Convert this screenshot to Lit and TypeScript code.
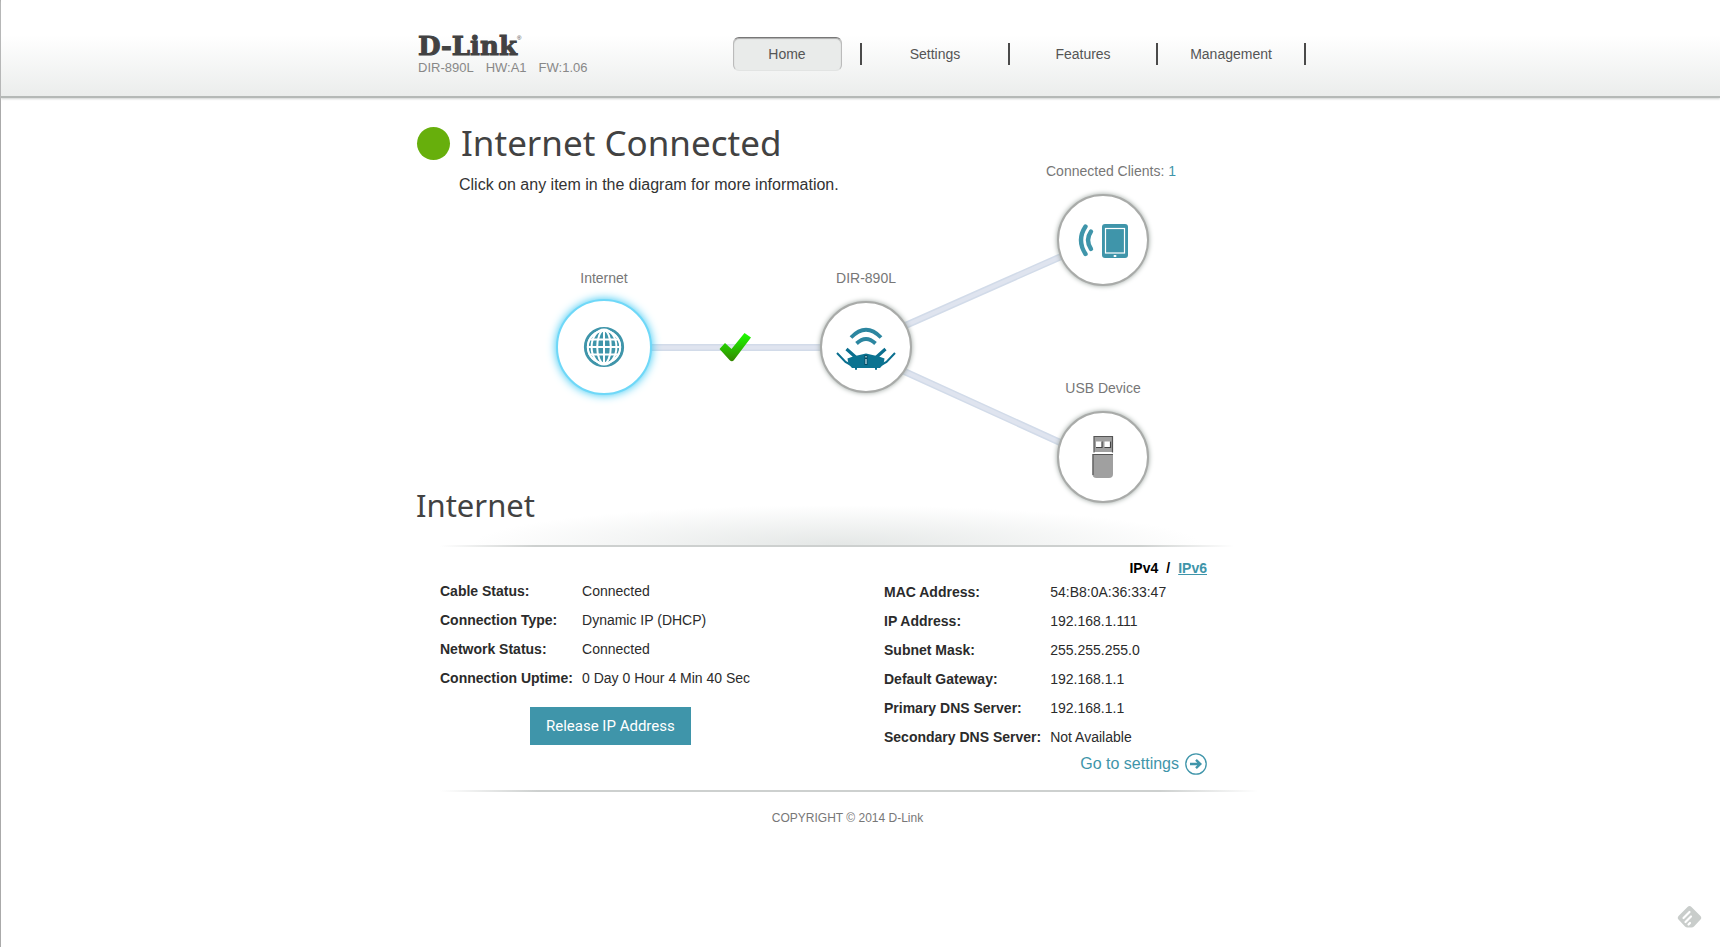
import { LitElement, html, css, svg } from "lit";
import { customElement, property } from "lit/decorators.js";

type Row = [string, string];

const globeIcon = svg`
  <svg class="glyph" viewBox="-24 -24 48 48" width="48" height="48" aria-hidden="true">
    <circle r="15.5" fill="#3f95aa"/>
    <circle r="18.6" fill="none" stroke="#3f95aa" stroke-width="3"/>
    <circle r="16.2" fill="none" stroke="#fff" stroke-width="2"/>
    <g fill="none" stroke="#fff" stroke-width="2">
      <path d="M0-16V16M-16 0H16"/>
      <ellipse rx="6.8" ry="16.5"/>
      <ellipse rx="12.4" ry="17.5"/>
      <path d="M-14-7.5H14M-14 7.5H14"/>
    </g>
  </svg>`;

const routerIcon = svg`
  <svg class="glyph" viewBox="-32 -24 64 48" width="64" height="48" aria-hidden="true">
    <g fill="none" stroke="#2c86a0" stroke-linecap="butt" stroke-width="3.8">
      <path d="M-15-9.500Q0-25 15-9.500"/>
      <path d="M-9.500-3.500Q0-12.500 9.500-3.500"/>
    </g>
    <g fill="none" stroke="#0b6f8f">
      <path d="M-19.500 2L-10 10.500M19.500 2L10 10.500" stroke-width="3.200"/>
      <path d="M-29 6L-20.500 15L-14 18.500M29 6L20.500 15L14 18.500" stroke-width="2"/>
    </g>
    <path d="M-18.500 11.500L-13 9.500L0 6.500L13 9.500L18.500 11.500L17.500 17L14 21H-14L-17.500 17Z" fill="#0b7391"/>
    <path d="M-10 20.500v2.200M10 20.500v2.200" stroke="#0b6f8f" stroke-width="2"/>
    <path d="M0 8V18" stroke="#064b62" stroke-width="3"/>
    <path d="M0 9V10.500M0 12V17" stroke="#cfeaf2" stroke-width="1.200"/>
  </svg>`;

const tabletIcon = svg`
  <svg class="glyph" viewBox="-26 -18 52 36" width="52" height="36" aria-hidden="true">
    <g fill="none" stroke="#3f95aa" stroke-width="4.400" stroke-linecap="round">
      <path d="M-17.500-13.500Q-26.500 0-17.500 14"/>
      <path d="M-12-8.500Q-18 0-12 9"/>
    </g>
    <rect x="-1" y="-16" width="26" height="34" rx="3" fill="#3f95aa"/>
    <rect x="2.500" y="-11.500" width="19" height="24.500" fill="none" stroke="#fff" stroke-width="1.200"/>
    <rect x="10.500" y="15" width="3" height="2" rx="1" fill="#fff"/>
  </svg>`;

const usbIcon = svg`
  <svg class="glyph" viewBox="-12 -22 24 44" width="24" height="44" aria-hidden="true">
    <rect x="-9" y="-21" width="18.500" height="16" fill="#a0a0a0"/>
    <path d="M-9-4.500V-20.500H9.500V-4.500" fill="none" stroke="#555" stroke-width="1.200"/>
    <path d="M-7-15.500h6v5.500h-6zM1.500-15.500h6v5.500h-6z" fill="#fff"/>
    <path d="M-7-9.500h6v-6M1.500-9.500h6v-6" fill="none" stroke="#444" stroke-width="1.200"/>
    <path d="M-10.500-3H10V17q0 4-4 4H-6.500q-4 0-4-4z" fill="#a0a0a0"/>
    <path d="M-10 18V-2.500H10" fill="none" stroke="#555" stroke-width="1.200"/>
  </svg>`;

const arrowIcon = svg`
  <svg viewBox="0 0 22 22" width="22" height="22" aria-hidden="true">
    <circle cx="11" cy="11" r="10.200" fill="none" stroke="#3f95aa" stroke-width="1.300"/>
    <path d="M5 11H15M11 6.800L15.300 11L11 15.200" fill="none" stroke="#3f95aa" stroke-width="2.400"/>
  </svg>`;

@customElement("site-header")
class SiteHeader extends LitElement {
  static styles = css`
    :host {
      display: block;
      height: 96px;
      background: linear-gradient(#fff 0, #fff 35px, #ebedec 96px);
      border-bottom: 2px solid #b5b9b7;
      box-shadow: 0 1px 2px #d0d4d2;
    }
    .bar {
      display: flex;
      justify-content: space-between;
      max-width: 891px;
      margin: 0 auto;
      padding-top: 32px;
    }
    .brand {
      padding-left: 3px;
    }
    .logo {
      display: flex;
      color: #424242;
      font: bold 26px/28px "DejaVu Serif", serif;
      -webkit-text-stroke: 1px #424242;
      text-decoration: none;
    }
    .mark {
      font: 6px/8px "Liberation Sans", sans-serif;
      -webkit-text-stroke: 0;
      padding-top: 2px;
    }
    .versions {
      display: flex;
      gap: 12px;
      color: #888;
      font-size: 13px;
      line-height: 16px;
    }
    .menu {
      display: flex;
      padding-top: 5px;
    }
    .cell {
      box-sizing: border-box;
      width: 148px;
      height: 34px;
      padding-right: 2px;
      display: flex;
      justify-content: center;
      background: linear-gradient(#4a4a4a, #4a4a4a) right center / 2px 22px no-repeat;
    }
    .item {
      box-sizing: border-box;
      width: 109px;
      border: 1px solid transparent;
      border-radius: 6px;
      color: #555;
      font-size: 14px;
      line-height: 32px;
      text-align: center;
      text-decoration: none;
    }
    .current {
      background: #e9ebea;
      border-color: #777 #bbb #e2e4e3;
      box-shadow: inset 0 1px 1px #aaa;
    }
  `;
  render() {
    const items = ["Home", "Settings", "Features", "Management"];
    return html`<header class="bar">
      <div class="brand">
        <a class="logo" href="#">D-Link<span class="mark">®</span></a>
        <div class="versions"><span>DIR-890L</span><span>HW:A1</span><span>FW:1.06</span></div>
      </div>
      <nav class="menu">
        ${items.map(
          (t, i) => html`<div class="cell"><a class="item ${i === 0 ? "current" : ""}" href="#">${t}</a></div>`
        )}
      </nav>
    </header>`;
  }
}

@customElement("network-map")
class NetworkMap extends LitElement {
  static styles = css`
    :host {
      display: block;
      position: relative;
      height: 410px;
    }
    .links {
      position: absolute;
      left: 0;
      top: 0;
    }
    .node,
    .label {
      position: absolute;
      transform: translate(-50%, -50%);
    }
    .node {
      box-sizing: border-box;
      width: 92px;
      height: 92px;
      padding: 0;
      display: grid;
      place-items: center;
      background: #fff;
      border: 2px solid #a9aba9;
      border-radius: 50%;
      box-shadow: 0 0 5px #99a39e;
    }
    .active {
      width: 96px;
      height: 96px;
      border-color: #6fd8f8;
      box-shadow: 0 0 10px #33c6f2;
    }
    .glyph {
      display: block;
    }
    .label {
      color: #777;
      font-size: 14px;
      line-height: 18px;
      white-space: nowrap;
    }
    .count {
      color: #3f95aa;
    }
    .wan { left: 189px; top: 249px; }
    .router { left: 451px; top: 249px; }
    .clients { left: 688px; top: 142px; }
    .usb { left: 688px; top: 359px; }
    .wan-label { left: 189px; top: 180px; }
    .router-label { left: 451px; top: 180px; }
    .clients-label { left: 696px; top: 73px; }
    .usb-label { left: 688px; top: 290px; }
  `;
  render() {
    const routes = ["M189 249.500H451", "M451 245L688 140", "M451 256L688 364"];
    return html`
      <svg class="links" width="891" height="410" viewBox="0 0 891 410" aria-hidden="true">
        <defs>
          <linearGradient id="tick" x1="0" y1="0" x2="0" y2="1">
            <stop offset="0" stop-color="#1cff00" />
            <stop offset="1" stop-color="#358500" />
          </linearGradient>
        </defs>
        ${routes.map(
          (d) => svg`<path d=${d} fill="none" stroke="#d2dbe9" stroke-width="7"/>
            <path d=${d} fill="none" stroke="#dfe4ef" stroke-width="4"/>`
        )}
        <path d="M304.500 251L310 245L316.500 251L329.500 235L336 239.500L319 262Q317 264.500 314.500 262Z" fill="url(#tick)" />
      </svg>
      <button class="node active wan" aria-label="Internet">${globeIcon}</button>
      <button class="node router" aria-label="DIR-890L">${routerIcon}</button>
      <button class="node clients" aria-label="Connected Clients">${tabletIcon}</button>
      <button class="node usb" aria-label="USB Device">${usbIcon}</button>
      <div class="label wan-label">Internet</div>
      <div class="label router-label">DIR-890L</div>
      <div class="label clients-label">Connected Clients: <span class="count">1</span></div>
      <div class="label usb-label">USB Device</div>
    `;
  }
}

@customElement("info-list")
class InfoList extends LitElement {
  @property({ attribute: false }) rows: Row[] = [];
  static styles = css`
    :host {
      display: block;
    }
    .list {
      border-collapse: collapse;
      color: #2b2b2b;
      font-size: 14px;
      line-height: 29px;
      white-space: nowrap;
    }
    .term,
    .value {
      padding: 0;
      text-align: left;
    }
    .term {
      padding-right: 9px;
    }
  `;
  render() {
    return html`<table class="list">
      <tbody>
        ${this.rows.map(
          ([k, v]) => html`<tr><th class="term" scope="row">${k}:</th><td class="value">${v}</td></tr>`
        )}
      </tbody>
    </table>`;
  }
}

@customElement("app-root")
class AppRoot extends LitElement {
  static styles = css`
    :host {
      display: block;
      box-sizing: border-box;
      min-height: 100vh;
      border-left: 1px solid #aaa;
      background: #fff;
      font-family: "Liberation Sans", Arial, sans-serif;
    }
    .page {
      max-width: 891px;
      margin: 0 auto;
    }
    .hero {
      display: grid;
      grid-template-rows: auto 1fr;
    }
    .map {
      grid-area: 1 / 1 / 3 / 2;
      margin-bottom: 37px;
    }
    .intro {
      grid-area: 1 / 1;
      z-index: 1;
      justify-self: start;
      padding: 20px 0 0 2px;
    }
    .status {
      display: flex;
      align-items: center;
      gap: 11px;
    }
    .dot {
      width: 33px;
      height: 33px;
      border-radius: 50%;
      background: #67af0c;
    }
    .title,
    .subtitle {
      margin: 0;
      color: #424242;
      font-family: "Noto Sans", sans-serif;
      font-weight: 400;
    }
    .title {
      font-size: 35px;
      line-height: 50px;
    }
    .subtitle {
      grid-area: 2 / 1;
      align-self: end;
      justify-self: start;
      padding: 0 0 15px 1px;
      font-size: 31px;
      line-height: 50px;
    }
    .hint {
      margin: 7px 0 0 42px;
      color: #333;
      font-size: 16px;
      line-height: 20px;
    }
    .rule {
      height: 2px;
      margin: 0 72px 0 25px;
      background: linear-gradient(90deg, transparent, #cdd0cf 12%, #cdd0cf 88%, transparent);
    }
    .glow {
      grid-area: 2 / 1;
      align-self: end;
      height: 40px;
      margin: 0 72px 0 25px;
      background: radial-gradient(46% 100% at 50% 100%, #e4e7e6, transparent);
    }
    .details {
      display: flex;
      justify-content: space-between;
      padding: 11px 99px 0 25px;
    }
    .left {
      padding-top: 19px;
    }
    .right {
      width: 323px;
    }
    .release {
      display: block;
      margin: 14px 0 0 90px;
      padding: 0 16px;
      border: 0;
      background: #3f95aa;
      color: #fff;
      font: 400 15px/38px Roboto, sans-serif;
    }
    .versions {
      display: flex;
      justify-content: flex-end;
      gap: 8px;
      color: #000;
      font-size: 14px;
      font-weight: bold;
      line-height: 20px;
    }
    .link {
      color: #3f95aa;
    }
    .go {
      display: flex;
      justify-content: flex-end;
      align-items: center;
      gap: 6px;
      color: #3f95aa;
      font-size: 16px;
      line-height: 24px;
      text-decoration: none;
    }
    .end {
      margin: 14px 48px 0 25px;
    }
    .copyright {
      padding: 16px 26px 0 0;
      color: #777;
      font-size: 12px;
      line-height: 20px;
      text-align: center;
    }
    .badge {
      position: fixed;
      right: 18px;
      bottom: 19px;
      padding: 0;
      border: 0;
      background: none;
      line-height: 0;
    }
  `;
  render() {
    const left: Row[] = [
      ["Cable Status", "Connected"],
      ["Connection Type", "Dynamic IP (DHCP)"],
      ["Network Status", "Connected"],
      ["Connection Uptime", "0 Day 0 Hour 4 Min 40 Sec"],
    ];
    const right: Row[] = [
      ["MAC Address", "54:B8:0A:36:33:47"],
      ["IP Address", "192.168.1.111"],
      ["Subnet Mask", "255.255.255.0"],
      ["Default Gateway", "192.168.1.1"],
      ["Primary DNS Server", "192.168.1.1"],
      ["Secondary DNS Server", "Not Available"],
    ];
    return html`
      <site-header></site-header>
      <main class="page">
        <section class="hero">
          <div class="glow"></div>
          <network-map class="map"></network-map>
          <div class="intro">
            <div class="status"><span class="dot"></span><h1 class="title">Internet Connected</h1></div>
            <p class="hint">Click on any item in the diagram for more information.</p>
          </div>
          <h2 class="subtitle">Internet</h2>
        </section>
        <div class="rule"></div>
        <section class="details">
          <div class="left">
            <info-list .rows=${left}></info-list>
            <button class="release">Release IP Address</button>
          </div>
          <div class="right">
            <div class="versions"><span>IPv4</span><span>/</span><a class="link" href="#">IPv6</a></div>
            <info-list .rows=${right}></info-list>
            <a class="go" href="#">Go to settings ${arrowIcon}</a>
          </div>
        </section>
        <div class="rule end"></div>
        <footer class="copyright">COPYRIGHT © 2014 D-Link</footer>
      </main>
      <button class="badge" aria-label="Open in reader">
        <svg width="25" height="22" viewBox="0 0 25 22" aria-hidden="true">
          <path d="M10.500 1Q12.500-.8 14.500 1L23.500 10Q25 12 23.500 13.500L17 20.500Q16 21.500 14.500 21.500H10.500Q9 21.500 8 20.500L1.500 13.500Q0 12 1.500 10Z" fill="#c9cdcb" />
          <path d="M6.500 12L12.500 6M8.500 16L14 10.500M11.500 18.500L13 17" stroke="#fff" stroke-width="2.200" stroke-linecap="round" />
        </svg>
      </button>
    `;
  }
}
